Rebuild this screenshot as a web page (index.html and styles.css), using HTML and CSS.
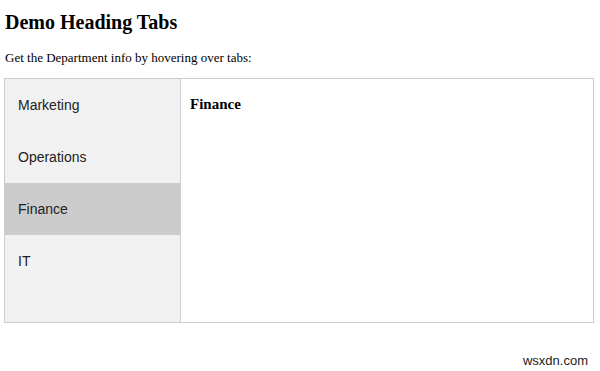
FILE: index.html
```html
<!DOCTYPE html>
<html lang="en">
<head>
    <meta charset="UTF-8">
    <meta name="viewport" content="width=device-width, initial-scale=1.0">
    <title>Demo Heading Tabs</title>
    <link rel="stylesheet" href="styles.css">
</head>
<body>
    <h2>Demo Heading Tabs</h2>
    <p>Get the Department info by hovering over tabs:</p>

    <div class="tabs">
        <div class="tab-list">
            <button class="tab-link">Marketing</button>
            <button class="tab-link">Operations</button>
            <button class="tab-link active">Finance</button>
            <button class="tab-link">IT</button>
        </div>
        <div class="tab-content">
            <h3>Finance</h3>
        </div>
    </div>

    <div class="footer">wsxdn.com</div>
</body>
</html>
```

FILE: styles.css
```css
body {
    font-family: "Liberation Serif", "Times New Roman", serif;
    margin: 0;
    padding: 0 6px 0 4px;
    background: white;
    color: black;
}

h2 {
    font-size: 20px;
    margin: 0;
    padding: 11px 0 0 1px;
    line-height: 23px;
}

p {
    font-size: 13px;
    margin: 16px 0 0 1px;
    line-height: 15px;
}

.tabs {
    display: flex;
    margin-top: 13px;
    border: 1px solid #ccc;
    height: 243px;
}

.tab-list {
    width: 175px;
    background: #f1f1f1;
    border-right: 1px solid #ccc;
    display: flex;
    flex-direction: column;
}

.tab-link {
    display: block;
    background: inherit;
    color: #222;
    border: none;
    outline: none;
    text-align: left;
    cursor: pointer;
    font-family: "Liberation Sans", Arial, sans-serif;
    font-size: 14px;
    height: 52px;
    padding: 0 13px;
    transition: 0.3s;
}

.tab-link:hover {
    background: #ddd;
}

.tab-link.active {
    background: #ccc;
}

.tab-content {
    flex: 1;
    padding: 0 9px;
}

.tab-content h3 {
    font-size: 15px;
    margin: 17px 0 0 0;
    line-height: 17px;
}

.footer {
    font-family: "Liberation Sans", Arial, sans-serif;
    font-size: 13px;
    text-align: right;
    margin-top: 30px;
    padding-right: 6px;
    color: #222;
}
```
